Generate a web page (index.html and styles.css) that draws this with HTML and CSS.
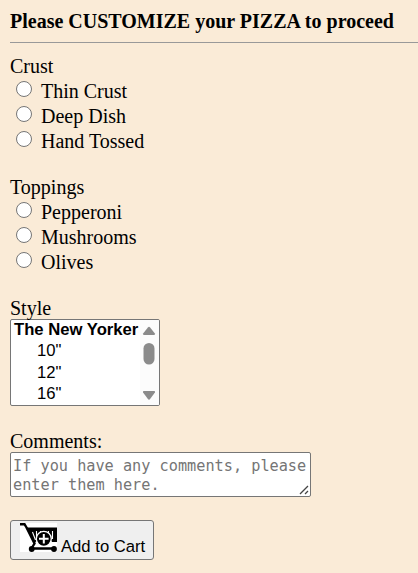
FILE: index.html
```html
<!DOCTYPE html>
<html lang="en">
<head>
<meta charset="utf-8">
<title>Customize your pizza</title>
<link rel="stylesheet" href="styles.css">
</head>
<body>
<form class="order">
  <h4 class="title">Please CUSTOMIZE your PIZZA to proceed</h4>
  <hr class="rule">
  <section class="group">
    <div class="label">Crust</div>
    <label class="choice"><input type="radio" name="crust">Thin Crust</label>
    <label class="choice"><input type="radio" name="crust">Deep Dish</label>
    <label class="choice"><input type="radio" name="crust">Hand Tossed</label>
  </section>
  <section class="group">
    <div class="label">Toppings</div>
    <label class="choice"><input type="radio" name="topping">Pepperoni</label>
    <label class="choice"><input type="radio" name="topping">Mushrooms</label>
    <label class="choice"><input type="radio" name="topping">Olives</label>
  </section>
  <section class="style">
    <div class="label">Style</div>
    <div class="listbox">
      <div class="options">
        <div class="option heading">The New Yorker</div>
        <div class="option">10"</div>
        <div class="option">12"</div>
        <div class="option">16"</div>
      </div>
      <svg class="scrollbar" width="19" height="85" viewBox="0 0 19 85">
        <path d="M7.900 7.400Q9 6 10.100 7.400L14.900 13.600Q15.500 15 14 15H4Q2.500 15 3.100 13.600Z"/>
        <rect x="3.500" y="23" width="11" height="21.500" rx="5.500"/>
        <path d="M7.900 79.100Q9 80.300 10.100 79.100L14.900 72.400Q15.500 71 14 71H4Q2.500 71 3.100 72.400Z"/>
      </svg>
    </div>
  </section>
  <section class="comments">
    <div class="label">Comments:</div>
    <div class="field">
      <textarea placeholder="If you have any comments, please enter them here."></textarea>
      <svg class="grip" width="10" height="10" viewBox="0 0 10 10"><path d="M1 9L9 1M6 9L9 6"/></svg>
    </div>
  </section>
  <button class="cart" type="button">
    <svg width="37" height="29" viewBox="0 0 37 29">
      <path class="paper" d="M0 0H37V29H0Z"/>
      <path class="frame" d="M0 1.200H4.500L6.500 4.500L14.500 20.500L11.500 25.500H34"/>
      <path class="basket" d="M6 4.500H37V19H32L31 17.500H17L14.500 20Z"/>
      <path class="slots" d="M12.500 9L15.500 17M16.500 8V13M20.500 8V12M24.500 8V11M28.500 8V12M32.500 8V16"/>
      <circle class="badge" cx="23.800" cy="15.800" r="7.500"/>
      <path class="plus" d="M23.800 11V20.600M19 15.800H28.600"/>
      <circle cx="11.700" cy="26" r="2.900"/><circle cx="34" cy="26" r="2.900"/>
    </svg>
    <span>Add to Cart</span>
  </button>
</form>
</body>
</html>
```
FILE: styles.css
```css
* { box-sizing: border-box; }
body {
  margin: 0;
  background: #faebd7;
  color: #000;
  font: 20px/25px "Liberation Serif", serif;
  overflow: hidden;
}
.order { padding: 9px 0 0 10px; }
.title { margin: 0; font-size: 20px; white-space: nowrap; }
.rule { height: 1px; margin: 8px 0 11px; border: 0; background: #999; }
.group { margin-bottom: 21px; }
.choice { display: flex; }
.choice input {
  appearance: none;
  width: 16px;
  height: 16px;
  margin: 2px 9px 0 6px;
  border: 1px solid #767676;
  border-radius: 50%;
  background: #fff;
}
.listbox {
  display: flex;
  justify-content: space-between;
  width: 150px;
  height: 87px;
  margin-top: -2px;
  border: 1px solid #767676;
  border-radius: 2px;
  background: #fff;
  overflow: hidden;
}
.options { width: 129px; margin-top: -1px; }
.option {
  padding-left: 26px;
  font: 16.67px/21.4px "Liberation Sans", sans-serif;
}
.heading { padding-left: 3px; font-weight: bold; white-space: nowrap; }
.scrollbar { background: #fcfcfc; fill: #8b8b8b; }
.comments { margin-top: 23px; }
.field { position: relative; width: 301px; height: 45px; margin-top: -2px; }
textarea {
  display: block;
  width: 301px;
  height: 45px;
  padding: 4px 2px 0;
  border: 1px solid #767676;
  border-radius: 2px;
  background: #fff;
  font: 15.23px/19px "DejaVu Sans Mono", monospace;
  resize: none;
  overflow: hidden;
}
textarea::placeholder { color: #757575; }
.grip { position: absolute; right: 2px; bottom: 2px; fill: none; stroke: #444; stroke-width: 1.3; }
.cart {
  display: flex;
  align-items: flex-start;
  gap: 4px;
  width: 144px;
  height: 40px;
  margin-top: 23px;
  padding: 2px 0 0 9px;
  border: 1px solid #767676;
  border-radius: 3px;
  background: #efefef;
  color: #000;
  font: 16.67px/20px "Liberation Sans", sans-serif;
  white-space: nowrap;
}
.cart span { margin-top: 14px; }
.cart svg { flex: none; }
.paper { fill: #fff; }
.frame { fill: none; stroke: #000; stroke-width: 2.400; }
.slots { stroke: #fff; stroke-width: 1.100; }
.badge { stroke: #fff; stroke-width: 1.300; }
.plus { stroke: #fff; stroke-width: 2; }
```
